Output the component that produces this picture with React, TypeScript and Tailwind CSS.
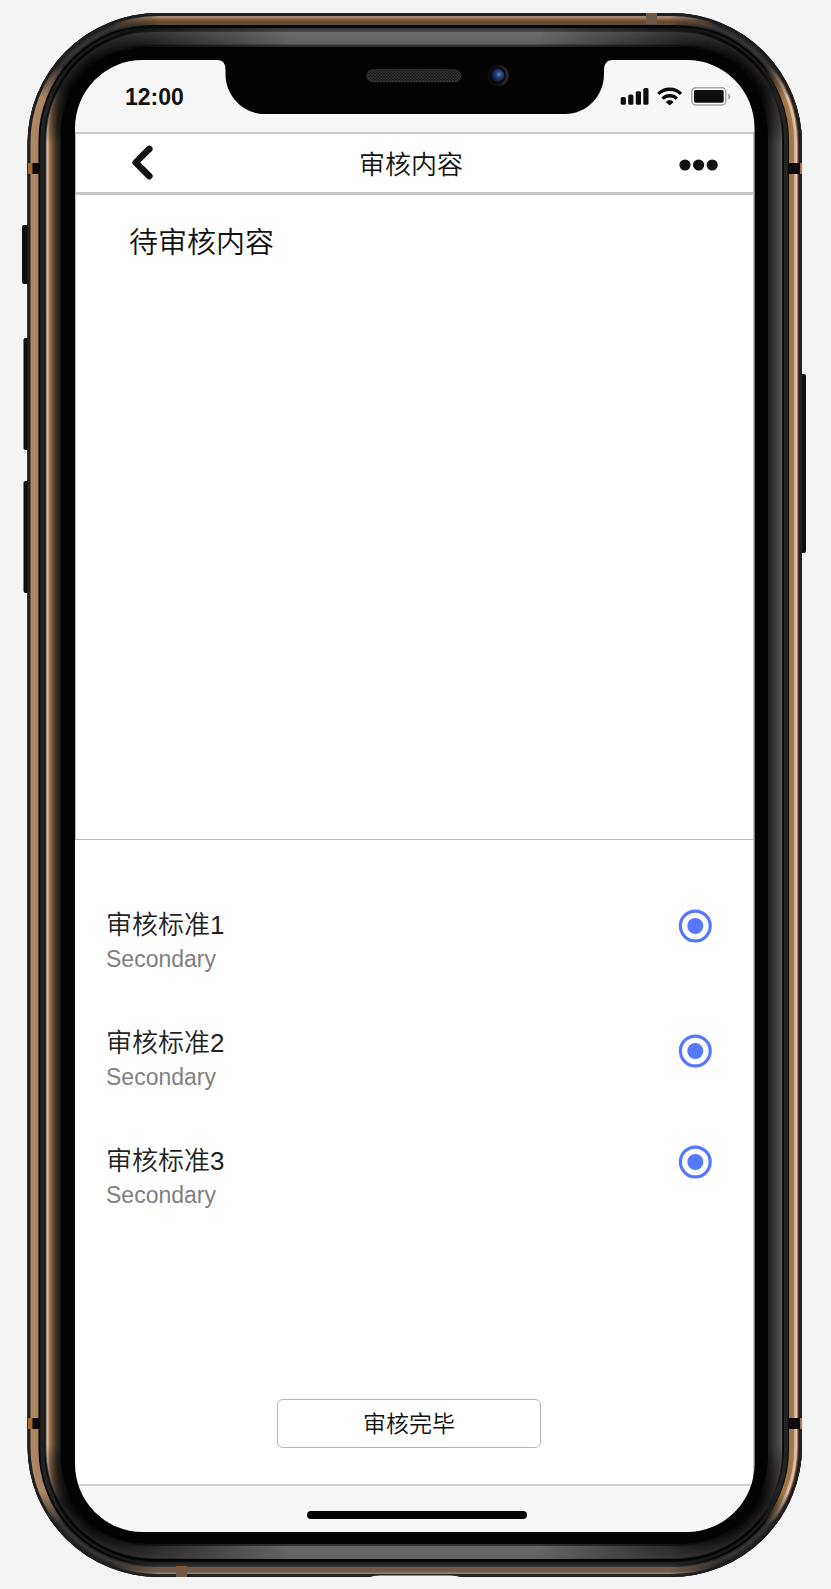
import React from "react";

const FONT = "font-['Liberation_Sans','Noto_Sans_CJK_SC',sans-serif]";

type Band = [from: number, to: number, start: string, end: string];

const rgb = (hex: string) => [1, 3, 5].map((i) => parseInt(hex.slice(i, i + 2), 16));
const mix = (a: string, b: string, t: number) => {
  const x = rgb(a);
  const y = rgb(b);
  return `rgb(${x.map((v, i) => Math.round(v + (y[i] - v) * t)).join(",")})`;
};

// Insets are measured from the outer edge of the handset towards the glass.
const corner: Band[] = [
  [0, 3, "#1e1e1e", "#1e1e1e"],
  [3, 7, "#242424", "#323232"],
  [7, 11, "#3a3938", "#222222"],
  [11, 13, "#050505", "#050505"],
  [13, 16, "#1c1c1c", "#1c1c1c"],
  [16, 19, "#030303", "#0a0a0a"],
  [19, 31, "#222020", "#090707"],
];
const left: Band[] = [
  [0, 3, "#202020", "#202020"],
  [3, 11, "#b08a68", "#a88462"],
  [11, 13, "#070707", "#070707"],
  [13, 17, "#262624", "#22221f"],
  [17, 18, "#0a0908", "#0a0908"],
  [18, 19, "#5c5046", "#5c5046"],
  [19, 21, "#cfc4bc", "#c4b7ad"],
  [21, 24, "#b2855a", "#8f6236"],
  [24, 29, "#84592f", "#33302d"],
  [29, 32, "#2e2e2e", "#242424"],
];
const right: Band[] = [
  [0, 3, "#222222", "#1c1c1c"],
  [3, 5, "#5a3620", "#a5765a"],
  [5, 8, "#dccbc0", "#c9b29e"],
  [8, 13, "#a87849", "#a2723f"],
  [13, 14, "#060606", "#060606"],
  [14, 18, "#222222", "#262626"],
  [18, 20, "#080808", "#111111"],
  [20, 23, "#5a5855", "#4e4c4a"],
  [23, 33, "#4b4947", "#232323"],
];
const top: Band[] = [
  [0, 3, "#1e1e1e", "#1e1e1e"],
  [3, 6, "#9d8a7c", "#9a7555"],
  [6, 8, "#8b5a2e", "#80552f"],
  [8, 12, "#5c4c3e", "#564c42"],
  [12, 15, "#080808", "#020202"],
  [15, 19, "#38373a", "#484749"],
  [19, 31, "#6a6a6a", "#606060"],
  [31, 33, "#4b4b4b", "#2b2b2b"],
];
const bottom: Band[] = [
  [0, 3, "#202020", "#262626"],
  [3, 5, "#8a8378", "#7d756a"],
  [5, 10, "#7a5a42", "#6b594c"],
  [10, 15, "#333333", "#1d1d1d"],
  [15, 18, "#080808", "#000000"],
  [18, 31, "#626262", "#686868"],
  [31, 32, "#333333", "#222222"],
];

function Rings({ bands, min = 0, max = 47 }: { bands: Band[]; min?: number; max?: number }) {
  const rings: React.ReactNode[] = [];
  bands.forEach(([from, to, start, end]) => {
    for (let i = from; i < to; i++) {
      if (i < min || i >= max) continue;
      const d = i + 1;
      const t = to - from > 1 ? (i - from) / (to - from - 1) : 0;
      rings.push(
        <rect
          key={i}
          x={27.5 + d}
          y={13 + d}
          width={774.5 - 2 * d}
          height={1564 - 2 * d}
          rx={131 - d * 1.3}
          fill="none"
          stroke={mix(start, end, t)}
          strokeWidth={2}
        />
      );
    }
  });
  return <>{rings}</>;
}

function Fade({ id, axis, a, b }: { id: string; axis: "x" | "y"; a: number; b: number }) {
  const size = axis === "x" ? 829.5 : 1590;
  const stops = [
    [a, 0],
    [b, 1],
    [size - b, 1],
    [size - a, 0],
  ];
  return (
    <>
      <linearGradient
        id={`${id}-g`}
        gradientUnits="userSpaceOnUse"
        x1={0}
        y1={0}
        x2={axis === "x" ? size : 0}
        y2={axis === "y" ? size : 0}
      >
        {stops.map(([p, o], i) => (
          <stop key={i} offset={p / size} stopColor="#fff" stopOpacity={o} />
        ))}
      </linearGradient>
      <mask id={id} maskUnits="userSpaceOnUse" x={0} y={0} width={831} height={1589}>
        <rect width={831} height={1589} fill={`url(#${id}-g)`} />
      </mask>
    </>
  );
}

function PhoneFrame() {
  return (
    <svg
      className="pointer-events-none absolute inset-0 z-10"
      width={831}
      height={1589}
      viewBox="0 0 831 1589"
      aria-hidden="true"
    >
      <defs>
        <Fade id="side-rim" axis="y" a={66} b={98} />
        <Fade id="side-bevel" axis="y" a={88} b={145} />
        <Fade id="end-rim" axis="x" a={110} b={160} />
        <Fade id="end-bevel" axis="x" a={90} b={290} />
        <clipPath id="clip-left"><path d="M0 0H120V1589H0Z" /></clipPath>
        <clipPath id="clip-right"><path d="M710 0H831V1589H710Z" /></clipPath>
        <clipPath id="clip-top"><path d="M0 0H831V110H0Z" /></clipPath>
        <clipPath id="clip-bottom"><path d="M0 1480H831V1589H0Z" /></clipPath>
        <pattern id="mesh" width={3} height={3} patternUnits="userSpaceOnUse">
          <rect width={3} height={3} fill="#171717" />
          <path d="M0 0L3 3M3 0L0 3" stroke="#404040" strokeWidth={0.6} />
        </pattern>
        <radialGradient id="lens" cx="0.6" cy="0.42" r="0.6">
          <stop offset="0" stopColor="#5b8ad0" />
          <stop offset="0.35" stopColor="#27477f" />
          <stop offset="1" stopColor="#0a1226" />
        </radialGradient>
        <linearGradient id="lens-rim">
          <stop offset="0.4" stopColor="#0c0c0c" />
          <stop offset="1" stopColor="#302e2c" />
        </linearGradient>
      </defs>

      <g fill="#101010">
        <rect x={22} y={225} width={9} height={59} rx={2} />
        <rect x={23.5} y={338} width={7} height={112} rx={2} />
        <rect x={23.5} y={481} width={7} height={112} rx={2} />
        <rect x={798} y={374} width={8} height={179} rx={2} />
      </g>

      <path
        fill="#020202"
        fillRule="evenodd"
        d="M158.500 13H671A131 131 0 0 1 802 144V1446A131 131 0 0 1 671 1577H158.500A131 131 0 0 1 27.500 1446V144A131 131 0 0 1 158.500 13Z
           M142.500 60H218Q225.500 60.500 225.500 70V74C225.500 96 243 114 265 114H565C587 114 604 96 604 74V70Q604 60.500 612 60H687A67.500 68 0 0 1 754.500 128V1464A67.500 68 0 0 1 687 1532H142.500A67.500 68 0 0 1 75 1464V128A67.500 68 0 0 1 142.500 60Z"
      />
      <Rings bands={corner} />
      <g clipPath="url(#clip-left)">
        <g mask="url(#side-rim)"><Rings bands={left} max={18} /></g>
        <g mask="url(#side-bevel)"><Rings bands={left} min={18} /></g>
      </g>
      <g clipPath="url(#clip-right)">
        <g mask="url(#side-rim)"><Rings bands={right} max={18} /></g>
        <g mask="url(#side-bevel)"><Rings bands={right} min={18} /></g>
      </g>
      <g clipPath="url(#clip-top)">
        <g mask="url(#end-rim)"><Rings bands={top} max={15} /></g>
        <g mask="url(#end-bevel)"><Rings bands={top} min={15} /></g>
      </g>
      <g clipPath="url(#clip-bottom)">
        <g mask="url(#end-rim)"><Rings bands={bottom} max={18} /></g>
        <g mask="url(#end-bevel)"><Rings bands={bottom} min={18} /></g>
      </g>

      <path d="M28 163h5v11h-5zM28 1418h5v11h-5z" fill="#a4682f" />
      <path d="M32.500 163h7v11h-7zM32.500 1418h7v11h-7zM789 163h11v11h-11zM789 1418h11v11h-11z" fill="#0b0b0d" />
      <path d="M800 163h2v11h-2zM800 1418h2v11h-2z" fill="#a4704a" />
      <path d="M646 13h11v3h-11zM176 1566h11v3h-11z" fill="#7c5638" />
      <path d="M646 16h11v8h-11zM176 1569h11v8h-11z" fill="#6c5a4c" />
      <path d="M368 1577.500Q374 1575.500 380 1575.500H450Q456 1575.500 462 1577.500Z" fill="#f4f4f4" />

      <rect x={366.800} y={69.800} width={94} height={12} rx={6} fill="url(#mesh)" stroke="#3c3c3c" strokeWidth={0.8} />
      <circle cx={498} cy={75.500} r={10.800} fill="url(#lens-rim)" />
      <circle cx={497.700} cy={75.500} r={8} fill="#07080c" />
      <circle cx={497.700} cy={75.300} r={6.600} fill="url(#lens)" />
    </svg>
  );
}

function StatusIcons() {
  return (
    <svg width={112} height={22} viewBox="620 86 112 22" fill="#0d0d0d" aria-hidden="true">
      <rect x={620.700} y={97} width={5.200} height={7.700} rx={1.500} />
      <rect x={628.200} y={94.600} width={5.200} height={10.100} rx={1.500} />
      <rect x={635.800} y={91.300} width={5.200} height={13.400} rx={1.500} />
      <rect x={643.300} y={88} width={5.200} height={16.700} rx={1.500} />
      <g fill="none" stroke="#0d0d0d" strokeWidth={3.300}>
        <path d="M658.300 93.900A16.300 16.300 0 0 1 681.100 93.900" />
        <path d="M662.600 98.700A10 10 0 0 1 676.800 98.700" />
      </g>
      <path d="M665.700 101.900Q669.700 98.300 673.700 101.900L669.700 105.600Z" />
      <rect x={691.800} y={87.800} width={34} height={17.200} rx={4} fill="#fcfcfc" stroke="#a5a5a5" strokeWidth={1.500} />
      <rect x={694} y={90} width={29.700} height={12.800} rx={1.800} />
      <path d="M728.200 93.300Q730.300 94.200 730.300 96.400T728.200 99.500Z" fill="#a5a5a5" />
    </svg>
  );
}

function Radio() {
  return (
    <svg width={34} height={34} viewBox="0 0 34 34" role="radio" aria-checked="true">
      <circle cx={17.300} cy={17} r={14.900} fill="none" stroke="#5678ff" strokeWidth={3.200} />
      <circle cx={17.300} cy={17} r={8} fill="#5678ff" />
    </svg>
  );
}

const criteria = ["审核标准1", "审核标准2", "审核标准3"];

export default function App() {
  return (
    <div className={`relative h-[1589px] w-[831px] overflow-hidden bg-[#f4f4f4] pl-[75px] pt-[60px] ${FONT}`}>
      <div className="flex h-[1472px] w-[680px] flex-col overflow-hidden rounded-[67px] bg-[#f7f7f7] text-[#111]">
        <div className="flex h-[72px] shrink-0 items-start justify-between pl-[50px] pr-[23px] pt-[26px]">
          <time className="text-[23px] font-bold leading-[22px]">12:00</time>
          <StatusIcons />
        </div>

        <header className="flex h-[63px] w-[679px] shrink-0 items-center justify-between border-x border-b-[3px] border-t-2 border-x-[#bbb] border-b-[#c6c6c6] border-t-[#cbcbcb] bg-white pl-[56px] pr-[34px]">
          <button aria-label="返回" className="-mt-[3px]">
            <svg width={22} height={36} viewBox="0 0 22 36" fill="none" stroke="#111" strokeWidth={6.600} strokeLinecap="round" strokeLinejoin="round">
              <path d="M17.300 4.900L3.700 18.500L17.300 32.100" />
            </svg>
          </button>
          <h1 className="-ml-[11px] mt-[3px] text-[26px] font-[350] leading-[30px]">审核内容</h1>
          <button aria-label="更多" className="mt-[3px]">
            <svg width={40} height={12} viewBox="0 0 40 12" fill="#111">
              <circle cx={6} cy={6} r={5.600} />
              <circle cx={19.600} cy={6} r={5.600} />
              <circle cx={33.200} cy={6} r={5.600} />
            </svg>
          </button>
        </header>

        <section className="h-[645px] w-[679px] shrink-0 border border-t-0 border-[#bbb] bg-white pl-[53px] pt-[29px]">
          <p className="text-[29px] font-[350] leading-[38px]">待审核内容</p>
        </section>

        <section className="flex h-[646px] w-[679px] shrink-0 flex-col border-b-2 border-r border-b-[#d0d0d0] border-r-[#c4c4c4] bg-white">
          <div className="flex h-[500px] justify-between pl-[31px] pr-[41px] pt-[68px]">
            <ul className="flex flex-col gap-[50px]">
              {criteria.map((name) => (
                <li key={name} className="h-[68px]">
                  <div className="text-[26px] font-[350] leading-[34px] text-[#222]">{name}</div>
                  <div className="text-[23px] leading-[34px] text-[#808080]">Secondary</div>
                </li>
              ))}
            </ul>
            <div className="flex flex-col pt-px">
              <Radio />
              <div className="pb-[77px] pt-[91px]"><Radio /></div>
              <Radio />
            </div>
          </div>
          <button className="ml-[202px] mt-[59px] h-[49px] w-[264px] rounded-[6px] border border-[#b5b5b5] pt-px text-[23px] font-[350] leading-[30px]">
            审核完毕
          </button>
        </section>

        <div className="flex grow items-start justify-center pt-[25px]">
          <div className="ml-[3px] h-[8px] w-[220px] rounded-full bg-black" />
        </div>
      </div>
      <PhoneFrame />
    </div>
  );
}
